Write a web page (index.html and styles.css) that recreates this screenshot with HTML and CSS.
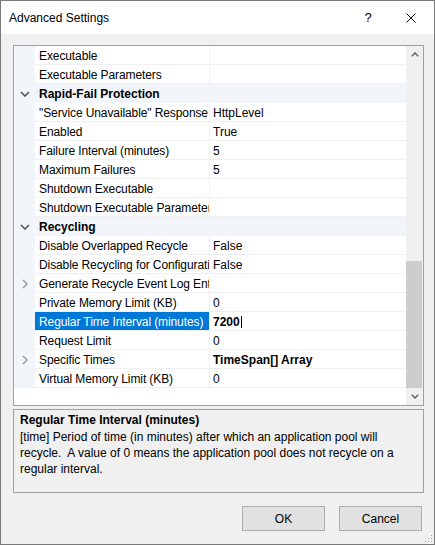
FILE: index.html
```html
<!DOCTYPE html>
<html>
<head>
<meta charset="utf-8">
<link rel="stylesheet" href="styles.css">
</head>
<body>
<div class="window">
  <div class="titlebar">
    <span class="title">Advanced Settings</span>
    <span class="help">?</span>
    <span class="close"><svg width="10" height="10" viewBox="0 0 10 10"><path d="M0.5 0.5 L9.5 9.5 M9.5 0.5 L0.5 9.5" stroke="#000" stroke-width="1" fill="none"/></svg></span>
  </div>
  <div class="content">
    <div class="grid">
      <div class="rows">
        <div class="row"><div class="gutter"></div><div class="name">Executable</div><div class="value"></div></div>
        <div class="row"><div class="gutter"></div><div class="name">Executable Parameters</div><div class="value"></div></div>
        <div class="row cat"><div class="gutter"><svg width="10" height="6" viewBox="0 0 10 6"><path d="M1 1 L5 5 L9 1" stroke="#555" stroke-width="1.6" fill="none"/></svg></div><div class="name">Rapid-Fail Protection</div></div>
        <div class="row"><div class="gutter"></div><div class="name">"Service Unavailable" Response Type</div><div class="value">HttpLevel</div></div>
        <div class="row"><div class="gutter"></div><div class="name">Enabled</div><div class="value">True</div></div>
        <div class="row"><div class="gutter"></div><div class="name">Failure Interval (minutes)</div><div class="value">5</div></div>
        <div class="row"><div class="gutter"></div><div class="name">Maximum Failures</div><div class="value">5</div></div>
        <div class="row"><div class="gutter"></div><div class="name">Shutdown Executable</div><div class="value"></div></div>
        <div class="row"><div class="gutter"></div><div class="name">Shutdown Executable Parameters</div><div class="value"></div></div>
        <div class="row cat"><div class="gutter"><svg width="10" height="6" viewBox="0 0 10 6"><path d="M1 1 L5 5 L9 1" stroke="#555" stroke-width="1.6" fill="none"/></svg></div><div class="name">Recycling</div></div>
        <div class="row"><div class="gutter"></div><div class="name">Disable Overlapped Recycle</div><div class="value">False</div></div>
        <div class="row"><div class="gutter"></div><div class="name">Disable Recycling for Configuration Changes</div><div class="value">False</div></div>
        <div class="row"><div class="gutter"><svg width="6" height="10" viewBox="0 0 6 10"><path d="M1 1 L5 5 L1 9" stroke="#999" stroke-width="1.5" fill="none"/></svg></div><div class="name">Generate Recycle Event Log Entry</div><div class="value"></div></div>
        <div class="row"><div class="gutter"></div><div class="name">Private Memory Limit (KB)</div><div class="value">0</div></div>
        <div class="row sel"><div class="gutter"></div><div class="name">Regular Time Interval (minutes)</div><div class="value bold">7200<span class="caret"></span></div></div>
        <div class="row"><div class="gutter"></div><div class="name">Request Limit</div><div class="value">0</div></div>
        <div class="row"><div class="gutter"><svg width="6" height="10" viewBox="0 0 6 10"><path d="M1 1 L5 5 L1 9" stroke="#999" stroke-width="1.5" fill="none"/></svg></div><div class="name">Specific Times</div><div class="value bold">TimeSpan[] Array</div></div>
        <div class="row"><div class="gutter"></div><div class="name">Virtual Memory Limit (KB)</div><div class="value">0</div></div>
      </div>
      <div class="scrollbar">
        <div class="sb-btn"><svg width="8" height="5" viewBox="0 0 8 5"><path d="M0.8 4.2 L4 1 L7.2 4.2" stroke="#606060" stroke-width="1.4" fill="none"/></svg></div>
        <div class="track"><div class="thumb"></div></div>
        <div class="sb-btn"><svg width="8" height="5" viewBox="0 0 8 5"><path d="M0.8 0.8 L4 4 L7.2 0.8" stroke="#606060" stroke-width="1.4" fill="none"/></svg></div>
      </div>
    </div>
    <div class="desc">
      <div class="desc-title">Regular Time Interval (minutes)</div>
      <div class="desc-text">[time] Period of time (in minutes) after which an application pool will<br>recycle.&nbsp; A value of 0 means the application pool does not recycle on a<br>regular interval.</div>
    </div>
    <div class="buttons">
      <button class="btn">OK</button>
      <button class="btn">Cancel</button>
    </div>
  </div>
  <svg class="grip" width="10" height="10" viewBox="0 0 10 10">
    <rect x="8" y="2" width="1" height="1" fill="#a0a0a0"/>
    <rect x="5" y="5" width="1" height="1" fill="#a0a0a0"/>
    <rect x="8" y="5" width="1" height="1" fill="#a0a0a0"/>
    <rect x="2" y="8" width="1" height="1" fill="#a0a0a0"/>
    <rect x="5" y="8" width="1" height="1" fill="#a0a0a0"/>
    <rect x="8" y="8" width="1" height="1" fill="#a0a0a0"/>
  </svg>
</div>
</body>
</html>
```

FILE: styles.css
```css
* { box-sizing: border-box; }
body {
  margin: 0;
  font-family: "Liberation Sans", Arial, sans-serif;
  font-size: 12px;
  color: #000;
}
.window {
  position: relative;
  width: 435px;
  height: 545px;
  border: 1px solid #7a7a7a;
  background: #f0f0f0;
  display: flex;
  flex-direction: column;
  overflow: hidden;
}
.titlebar {
  height: 33px;
  flex: none;
  background: #fff;
  display: flex;
  align-items: center;
  padding-left: 8px;
}
.title { flex: 1; }
.help {
  width: 40px;
  text-align: center;
  font-size: 13px;
}
.close {
  width: 46px;
  height: 33px;
  display: flex;
  align-items: center;
  justify-content: center;
}
.content {
  flex: 1;
  padding: 11px 10px 0 12px;
  display: flex;
  flex-direction: column;
}
.grid {
  height: 361px;
  flex: none;
  border: 1px solid #a0a0a0;
  background: #fff;
  display: flex;
}
.rows { flex: 1; }
.row {
  display: flex;
  height: 19px;
}
.gutter {
  width: 21px;
  flex: none;
  background: #f2f5fa;
  display: flex;
  align-items: center;
  justify-content: center;
}
.name {
  width: 175px;
  height: 19px;
  flex: none;
  padding: 1px 0 0 4px;
  line-height: 18px;
  letter-spacing: -0.1px;
  white-space: nowrap;
  overflow: hidden;
  border-right: 1px solid #f0f0f0;
  border-bottom: 1px solid #f0f0f0;
}
.value {
  flex: 1;
  height: 19px;
  padding: 1px 0 0 3px;
  line-height: 18px;
  white-space: nowrap;
  overflow: hidden;
  border-bottom: 1px solid #f0f0f0;
}
.bold { font-weight: bold; }
.caret {
  display: inline-block;
  width: 1px;
  height: 12px;
  background: #000;
  margin-left: 1px;
  vertical-align: -2px;
}
.row.cat .name {
  flex: 1;
  width: auto;
  font-weight: bold;
  letter-spacing: 0;
  background: #f2f5fa;
  border-right: none;
  border-bottom-color: #f2f5fa;
}
.row.sel .name {
  background: #0078d7;
  color: #fff;
}
.scrollbar {
  width: 17px;
  flex: none;
  background: #f0f0f0;
  display: flex;
  flex-direction: column;
}
.sb-btn {
  height: 17px;
  flex: none;
  display: flex;
  align-items: center;
  justify-content: center;
}
.track {
  flex: 1;
  display: flex;
  flex-direction: column;
  justify-content: flex-end;
}
.thumb {
  height: 127px;
  background: #cdcdcd;
  margin-right: 1px;
}
.desc {
  margin-top: 3px;
  height: 84px;
  flex: none;
  border: 1px solid #a0a0a0;
  padding: 2px 6px;
  line-height: 16px;
}
.desc-title { font-weight: bold; margin-bottom: 1px; }
.buttons {
  display: flex;
  justify-content: flex-end;
  gap: 14px;
  margin-top: 13px;
  padding-right: 2px;
}
.btn {
  width: 83px;
  height: 25px;
  background: #e1e1e1;
  border: 1px solid #adadad;
  font-family: "Liberation Sans", Arial, sans-serif;
  font-size: 12px;
  color: #000;
  padding: 0;
}
.grip {
  position: absolute;
  right: 1px;
  bottom: 1px;
}
```
